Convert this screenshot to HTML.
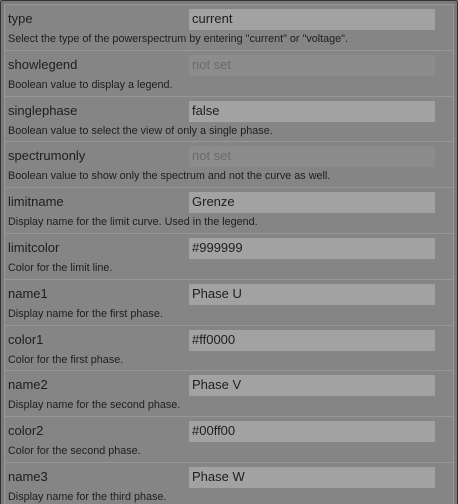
<!DOCTYPE html><html><head><style>
*{margin:0;padding:0;box-sizing:border-box}
html,body{width:458px;height:504px;overflow:hidden;background:#777;font-family:"Liberation Sans",sans-serif}
.outer{position:absolute;left:0;top:0;width:458px;height:504px;border:1px solid #333;border-bottom:none;border-radius:3px 3px 0 0;background:#7a7a7a}
.panel{position:absolute;left:4px;top:4px;width:450px;height:500px;overflow:hidden}
.row{height:45.8px;border:1px solid #979797;border-bottom:none;background:#858585;position:relative}
.lbl{position:absolute;left:3px;top:6px;font-size:13px;color:#1e1e1e}
.inp{position:absolute;left:184px;top:4px;width:246px;height:21px;background:#a2a2a2;font-size:13px;color:#1e1e1e;padding:2px 3px}
.inp.ns{background:#8c8c8c;color:#6b6b6b}
.desc{position:absolute;left:3px;top:28px;font-size:10.8px;color:#1e1e1e}
</style></head><body><div class="outer"></div><div class="panel">
<div class="row"><div class="lbl">type</div><div class="inp">current</div><div class="desc">Select the type of the powerspectrum by entering "current" or "voltage".</div></div>
<div class="row"><div class="lbl">showlegend</div><div class="inp ns">not set</div><div class="desc">Boolean value to display a legend.</div></div>
<div class="row"><div class="lbl">singlephase</div><div class="inp">false</div><div class="desc">Boolean value to select the view of only a single phase.</div></div>
<div class="row"><div class="lbl">spectrumonly</div><div class="inp ns">not set</div><div class="desc">Boolean value to show only the spectrum and not the curve as well.</div></div>
<div class="row"><div class="lbl">limitname</div><div class="inp">Grenze</div><div class="desc">Display name for the limit curve. Used in the legend.</div></div>
<div class="row"><div class="lbl">limitcolor</div><div class="inp">#999999</div><div class="desc">Color for the limit line.</div></div>
<div class="row"><div class="lbl">name1</div><div class="inp">Phase U</div><div class="desc">Display name for the first phase.</div></div>
<div class="row"><div class="lbl">color1</div><div class="inp">#ff0000</div><div class="desc">Color for the first phase.</div></div>
<div class="row"><div class="lbl">name2</div><div class="inp">Phase V</div><div class="desc">Display name for the second phase.</div></div>
<div class="row"><div class="lbl">color2</div><div class="inp">#00ff00</div><div class="desc">Color for the second phase.</div></div>
<div class="row"><div class="lbl">name3</div><div class="inp">Phase W</div><div class="desc">Display name for the third phase.</div></div>
</div></body></html>
